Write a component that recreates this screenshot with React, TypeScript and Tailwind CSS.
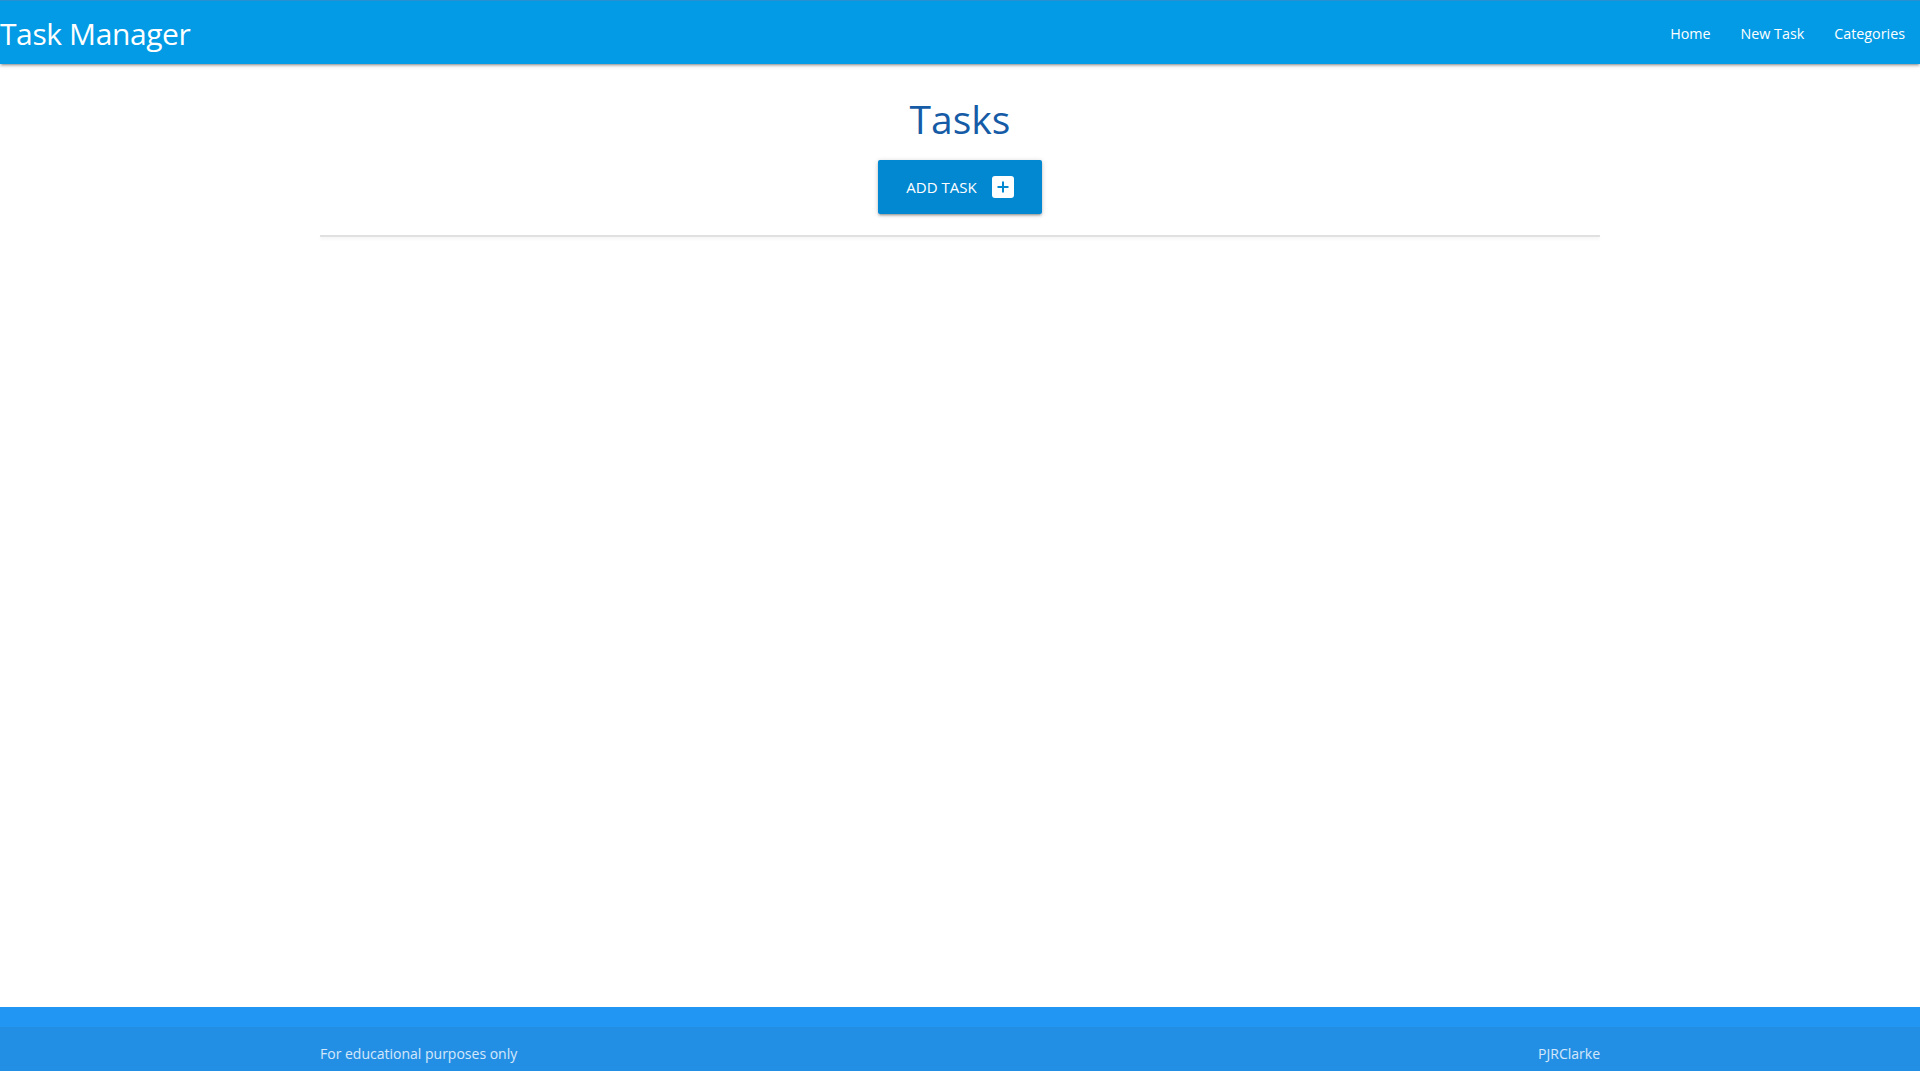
import React from "react";

function AddBoxIcon() {
  return (
    <svg width="22" height="22" viewBox="0 0 22 22" aria-hidden="true">
      <rect x="0" y="0" width="22" height="22" rx="3" fill="#ffffff" />
      <rect x="10" y="5.5" width="2" height="11" fill="#0288d1" />
      <rect x="5.5" y="10" width="11" height="2" fill="#0288d1" />
    </svg>
  );
}

export default function App() {
  return (
    <div className="flex min-h-[1077px] flex-col bg-white font-['Open_Sans','Noto_Sans',sans-serif]">
      <nav className="relative z-10 flex h-16 items-center justify-between border-t border-[#2a8fcf] bg-[#039be5] text-white shadow-[0_2px_2px_0_rgba(0,0,0,0.14),0_3px_1px_-2px_rgba(0,0,0,0.12),0_1px_5px_0_rgba(0,0,0,0.2)]">
        <a className="pt-[3px] text-[30px] leading-[60px] tracking-[-0.4px]">Task Manager</a>
        <ul className="flex h-full items-center pt-[2px]">
          <li><a className="block px-[15px] text-[14.3px] leading-[61px]">Home</a></li>
          <li><a className="block px-[15px] text-[14.3px] leading-[61px]">New Task</a></li>
          <li><a className="block px-[15px] text-[14.3px] leading-[61px]">Categories</a></li>
        </ul>
      </nav>

      <main className="flex-1">
        <div className="mx-auto w-[1280px]">
          <h3 className="mt-[31px] text-center text-[39px] leading-[48px] text-[#155ba6]">Tasks</h3>
          <div className="mt-[17px] flex justify-center">
            <button className="flex h-[54px] w-[164px] items-center justify-center gap-[15px] rounded-[2px] bg-[#0288d1] text-[15px] uppercase text-white shadow-[0_2px_2px_0_rgba(0,0,0,0.14),0_3px_1px_-2px_rgba(0,0,0,0.12),0_1px_5px_0_rgba(0,0,0,0.2)]">
              <span>Add Task</span>
              <AddBoxIcon />
            </button>
          </div>
          <div className="mt-[21px] h-[2px] bg-[#e0e0e0] shadow-[0_2px_3px_0_rgba(0,0,0,0.06)]" />
        </div>
      </main>

      <footer className="bg-[#2196f3] pt-5 text-white">
        <div className="h-[50px] bg-[rgba(51,51,51,0.08)]">
          <div className="mx-auto flex h-full w-[1280px] items-center justify-between pt-[2px] text-[14px] text-white/80">
            <span>For educational purposes only</span>
            <span>PJRClarke</span>
          </div>
        </div>
      </footer>
    </div>
  );
}
